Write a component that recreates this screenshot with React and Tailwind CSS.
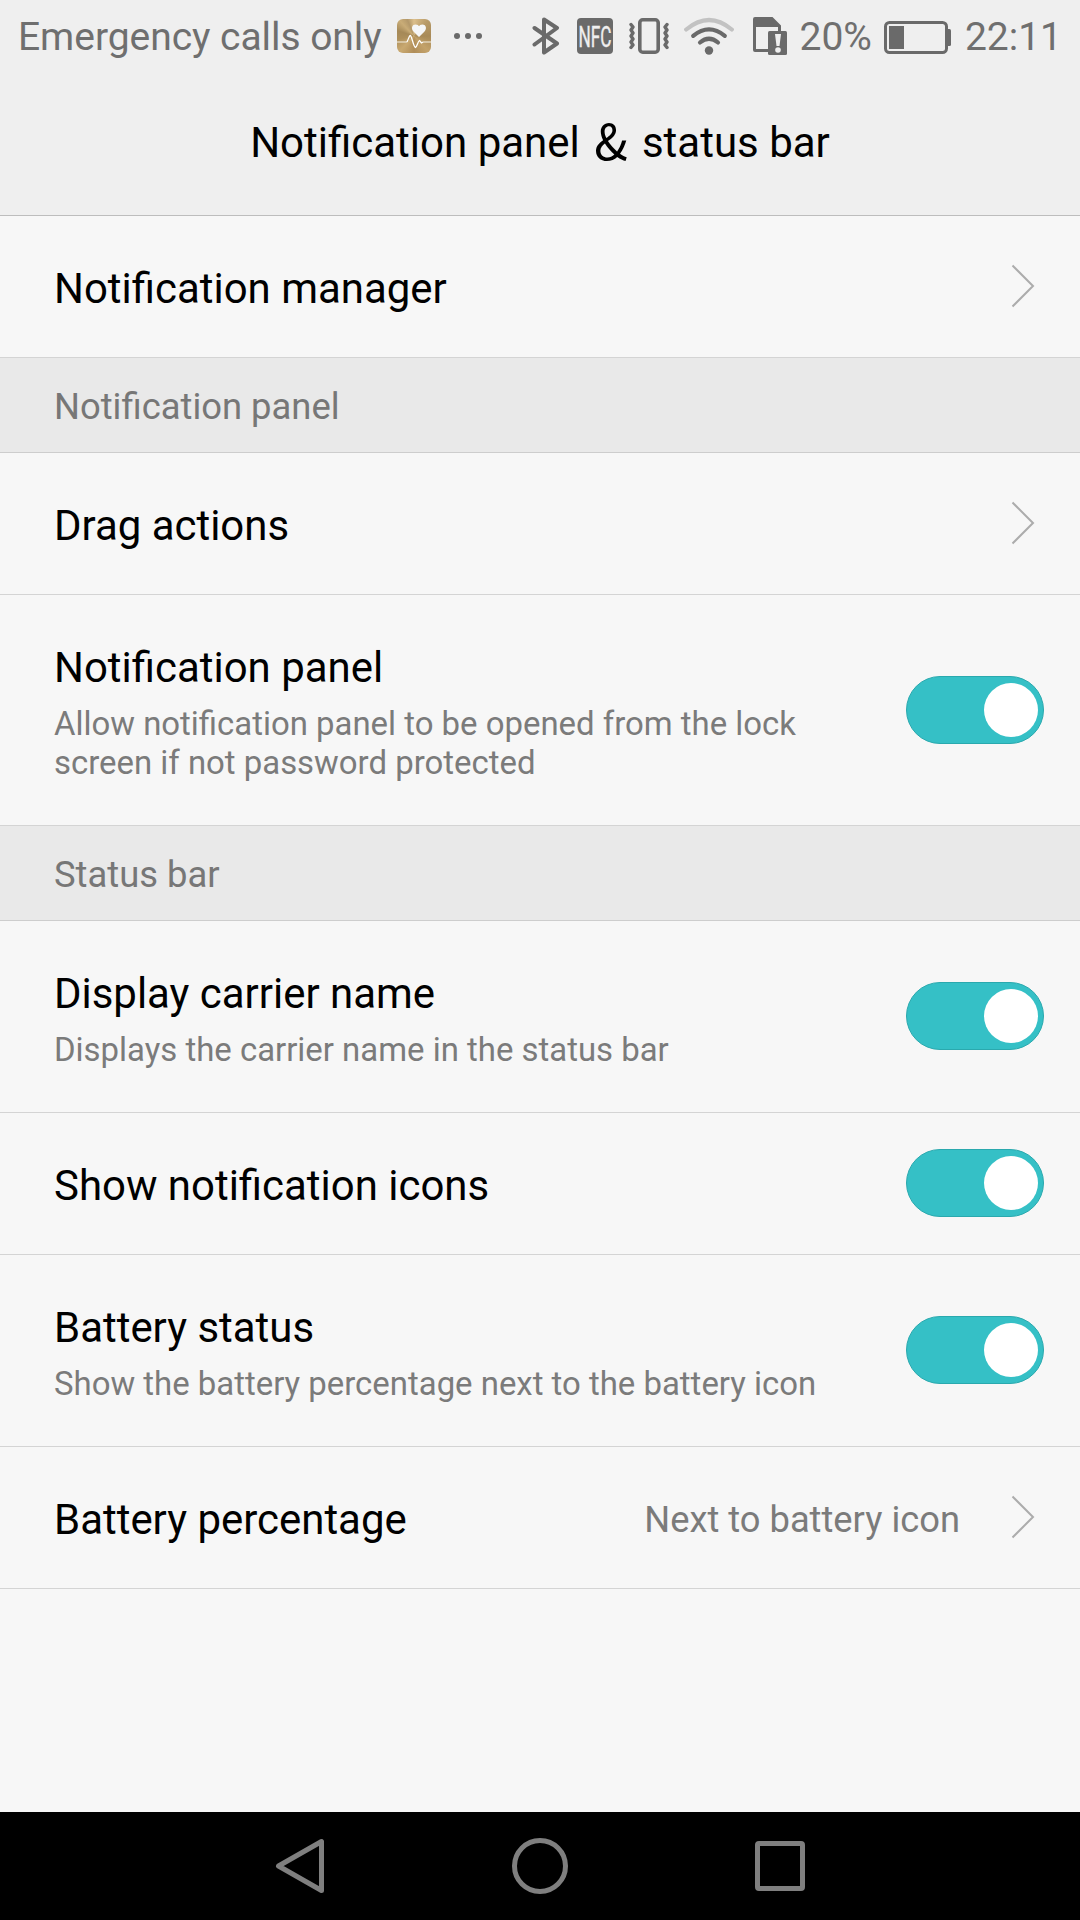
import React, { useState } from 'react';

const BluetoothIcon = () => (
  <svg width="28" height="38" viewBox="0 0 28 38" fill="none" stroke="#6a6a6a" strokeWidth="4" strokeLinecap="round" strokeLinejoin="round">
    <path d="M2.5 11 L25 26.5 L12 35.5 V2.5 L25 11 L2.5 27.5" />
  </svg>
);

const NfcIcon = () => (
  <svg className="overflow-visible" width="36" height="36" viewBox="0 0 36 36">
    <rect width="36" height="36" rx="4" fill="#6a6a6a" />
    <text x="1.5" y="29" fontSize="30" fontFamily="Roboto, sans-serif" fontWeight="400" fill="#efefef" stroke="#efefef" strokeWidth="0.4" textLength="33" lengthAdjust="spacingAndGlyphs">NFC</text>
  </svg>
);

const VibrateIcon = () => (
  <svg width="40" height="36" viewBox="0 0 40 36" fill="none" stroke="#6a6a6a" strokeLinecap="round" strokeLinejoin="round">
    <rect x="10.8" y="1.8" width="18.4" height="32.4" rx="3" strokeWidth="3.6" />
    <path d="M2 6.500 L4 9 L2 12 L4 15 L2 18 L4 21 L2 24 L4 27 L2 29.500" strokeWidth="3.4" />
    <path d="M38 6.500 L36 9 L38 12 L36 15 L38 18 L36 21 L38 24 L36 27 L38 29.500" strokeWidth="3.4" />
  </svg>
);

const WifiIcon = () => (
  <svg width="50" height="38" viewBox="0 0 50 38" fill="none" strokeWidth="4.200" strokeLinecap="round">
    <path d="M2.200 12.500 Q25 -6.500 47.800 12.500" stroke="#c2c2c2" />
    <path d="M9.200 18.800 Q25 5.800 40.800 18.800" stroke="#6a6a6a" />
    <path d="M16 25.500 Q25 18 34 25.500" stroke="#6a6a6a" />
    <circle cx="25" cy="33.500" r="4.200" fill="#6a6a6a" />
  </svg>
);

const SimAlertIcon = () => (
  <svg width="34" height="38" viewBox="0 0 34 38">
    <path d="M2 0 H19.500 L28 8.500 V14 H25 V10 H3 V32 H15 V35 H2 Q0 35 0 33 V2 Q0 0 2 0 Z" fill="#6a6a6a" />
    <rect x="15" y="14" width="19" height="24" rx="1.500" fill="#6a6a6a" />
    <path d="M22 17 H28 L26.500 29 H23.500 Z" fill="#efefef" />
    <circle cx="25" cy="33" r="2.800" fill="#efefef" />
  </svg>
);

const BatteryIcon = () => (
  <svg width="67" height="33" viewBox="0 0 67 33">
    <rect x="1.500" y="1.500" width="61" height="30" rx="4" fill="none" stroke="#6a6a6a" strokeWidth="3" />
    <rect x="5" y="5" width="15" height="23" fill="#6a6a6a" />
    <path d="M64 8 H65.500 Q67 8 67 9.500 V23.500 Q67 25 65.500 25 H64 Z" fill="#6a6a6a" />
  </svg>
);

const HealthIcon = () => (
  <div className="relative h-[34px] w-[34px] overflow-hidden rounded-[6px] bg-[conic-gradient(from_0deg_at_50%_50%,#dcbf8c,#b79a68_12%,#a88a58_25%,#c3a26a_38%,#b08d58_50%,#c9a971_62%,#ad8f5b_72%,#a58958_80%,#c9ac77_88%,#b3986a_94%,#dcbf8c)]">
    <svg className="absolute inset-0" width="34" height="34" viewBox="0 0 34 34" fill="none">
      <path d="M0 23 H10 M26 23 H34" stroke="#e0d2b8" strokeWidth="1.600" />
      <path d="M10 23 C11.500 20 12.500 16 13.500 16.500 C15 18 16.500 28 18.500 28.500 C20 28 21 22 22.500 21.500 L24.500 24 L26 23" stroke="#fff" strokeWidth="1.300" />
      <path d="M22 18 L16.500 12.500 C13.500 9 15.500 5.500 18.500 5.500 C20.500 5.500 21.500 6.500 22 7.300 C22.500 6.500 23.500 5.500 25.500 5.500 C28.500 5.500 30.500 9 27.500 12.500 Z" fill="#f5f6f8" />
    </svg>
  </div>
);

const StatusBar = () => (
  <div className="flex h-[73px] items-center pl-[18px] pr-[18px] text-[39px] leading-[73px] text-[#6f6f6f]">
    <span className="whitespace-nowrap pt-px tracking-[-0.05px]">Emergency calls only</span>
    <div className="ml-[15px] -mt-px">
      <HealthIcon />
    </div>
    <div className="ml-[23px] -mt-px flex gap-[5px]">
      <span className="h-1.5 w-1.5 rounded-full bg-[#6a6a6a]" />
      <span className="h-1.5 w-1.5 rounded-full bg-[#6a6a6a]" />
      <span className="h-1.5 w-1.5 rounded-full bg-[#6a6a6a]" />
    </div>
    <div className="ml-auto flex items-center">
      <div className="-mt-px"><BluetoothIcon /></div>
      <div className="ml-[17px] -mt-px"><NfcIcon /></div>
      <div className="ml-4 -mt-px"><VibrateIcon /></div>
      <div className="ml-[15px] -mt-px"><WifiIcon /></div>
      <div className="ml-[19px] -mt-px"><SimAlertIcon /></div>
      <span className="ml-3 pt-px">20%</span>
      <div className="ml-3 pt-0.5"><BatteryIcon /></div>
      <span className="ml-3.5 pt-px">22:11</span>
    </div>
  </div>
);

const Chevron = () => (
  <svg className="-mt-0.5" width="24" height="44" viewBox="0 0 24 44" fill="none" stroke="#acacac" strokeWidth="2">
    <path d="M1.500 1.500 L22 22 L1.500 42.500" />
  </svg>
);

const Toggle = ({ checked, onChange, label }) => (
  <button
    role="switch"
    aria-checked={checked}
    aria-label={label}
    onClick={onChange}
    className={`flex h-[68px] w-[138px] shrink-0 items-center rounded-full border px-[5px] ${
      checked ? 'justify-end border-[#2aa9ae] bg-[#35c0c6]' : 'justify-start border-gray-400 bg-gray-300'
    }`}
  >
    <span className="h-[54px] w-[54px] rounded-full bg-white" />
  </button>
);

const SectionHeader = ({ children }) => (
  <h2 className="flex h-[95px] items-center border-b border-[#cdcdcd] bg-[#e9e9e9] pl-[54px] pt-1 text-[36.4px] text-[#777777]">
    {children}
  </h2>
);

const Row = ({ title, description, height, children }) => (
  <div className={`flex items-center justify-between border-b border-[#d4d4d4] pl-[54px] ${height}`}>
    <div className={description ? 'pt-[3px]' : 'pt-[5px]'}>
      <p className="text-[41.95px] leading-[50px] text-black">{title}</p>
      {description && (
        <p className="-mb-px mt-[11px] w-[780px] text-[32.92px] leading-[39px] text-[#7b7b7b]">{description}</p>
      )}
    </div>
    {children}
  </div>
);

const App = () => {
  const [settings, setSettings] = useState({
    panel: true,
    carrier: true,
    icons: true,
    battery: true,
  });

  const toggle = (key) => {
    setSettings({ ...settings, [key]: !settings[key] });
  };

  return (
    <div className="flex h-[1920px] w-[1080px] flex-col overflow-hidden bg-[#f7f7f7] font-[Roboto,sans-serif]">
      <header className="h-[216px] border-b border-[#bdbdbd] bg-[#efefef]">
        <StatusBar />
        <h1 className="flex h-[95px] items-center justify-center whitespace-pre pt-[45px] text-[42px] leading-[50px] text-black">
          <span>Notification panel </span>
          <span className="mx-1 mt-[-8px] font-['Noto_Sans_CJK_SC',sans-serif] text-[49px]">&amp;</span>
          <span> status bar</span>
        </h1>
      </header>

      <main className="flex-1">
        <Row title="Notification manager" height="h-[142px]">
          <div className="pr-[45px]"><Chevron /></div>
        </Row>

        <SectionHeader>Notification panel</SectionHeader>
        <Row title="Drag actions" height="h-[142px]">
          <div className="pr-[45px]"><Chevron /></div>
        </Row>
        <Row
          title="Notification panel"
          description="Allow notification panel to be opened from the lock screen if not password protected"
          height="h-[231px]"
        >
          <div className="pr-9"><Toggle label="Notification panel" checked={settings.panel} onChange={() => toggle('panel')} /></div>
        </Row>

        <SectionHeader>Status bar</SectionHeader>
        <Row title="Display carrier name" description="Displays the carrier name in the status bar" height="h-[192px]">
          <div className="pb-px pr-9"><Toggle label="Display carrier name" checked={settings.carrier} onChange={() => toggle('carrier')} /></div>
        </Row>
        <Row title="Show notification icons" height="h-[142px]">
          <div className="pb-px pr-9"><Toggle label="Show notification icons" checked={settings.icons} onChange={() => toggle('icons')} /></div>
        </Row>
        <Row title="Battery status" description="Show the battery percentage next to the battery icon" height="h-[192px]">
          <div className="pb-px pr-9"><Toggle label="Battery status" checked={settings.battery} onChange={() => toggle('battery')} /></div>
        </Row>
        <Row title="Battery percentage" height="h-[142px]">
          <div className="flex items-center gap-[51px] pr-[45px]">
            <span className="pt-[5px] text-[36.3px] text-[#7b7b7b]">Next to battery icon</span>
            <Chevron />
          </div>
        </Row>
      </main>

      {/* Navigation buttons */}
      <nav className="flex h-[108px] items-center bg-black pl-[275px]">
        <svg width="50" height="56" viewBox="0 0 50 56" fill="none" stroke="#7f7f7f" strokeWidth="5" strokeLinejoin="round">
          <path d="M3.500 28 L46.500 3.500 V52.500 Z" />
        </svg>
        <div className="ml-[187px] h-14 w-14 rounded-full border-[5px] border-[#7f7f7f]" />
        <div className="ml-[187px] h-[50px] w-[50px] rounded-[4px] border-[5px] border-[#7f7f7f]" />
      </nav>
    </div>
  );
};

export default App;
